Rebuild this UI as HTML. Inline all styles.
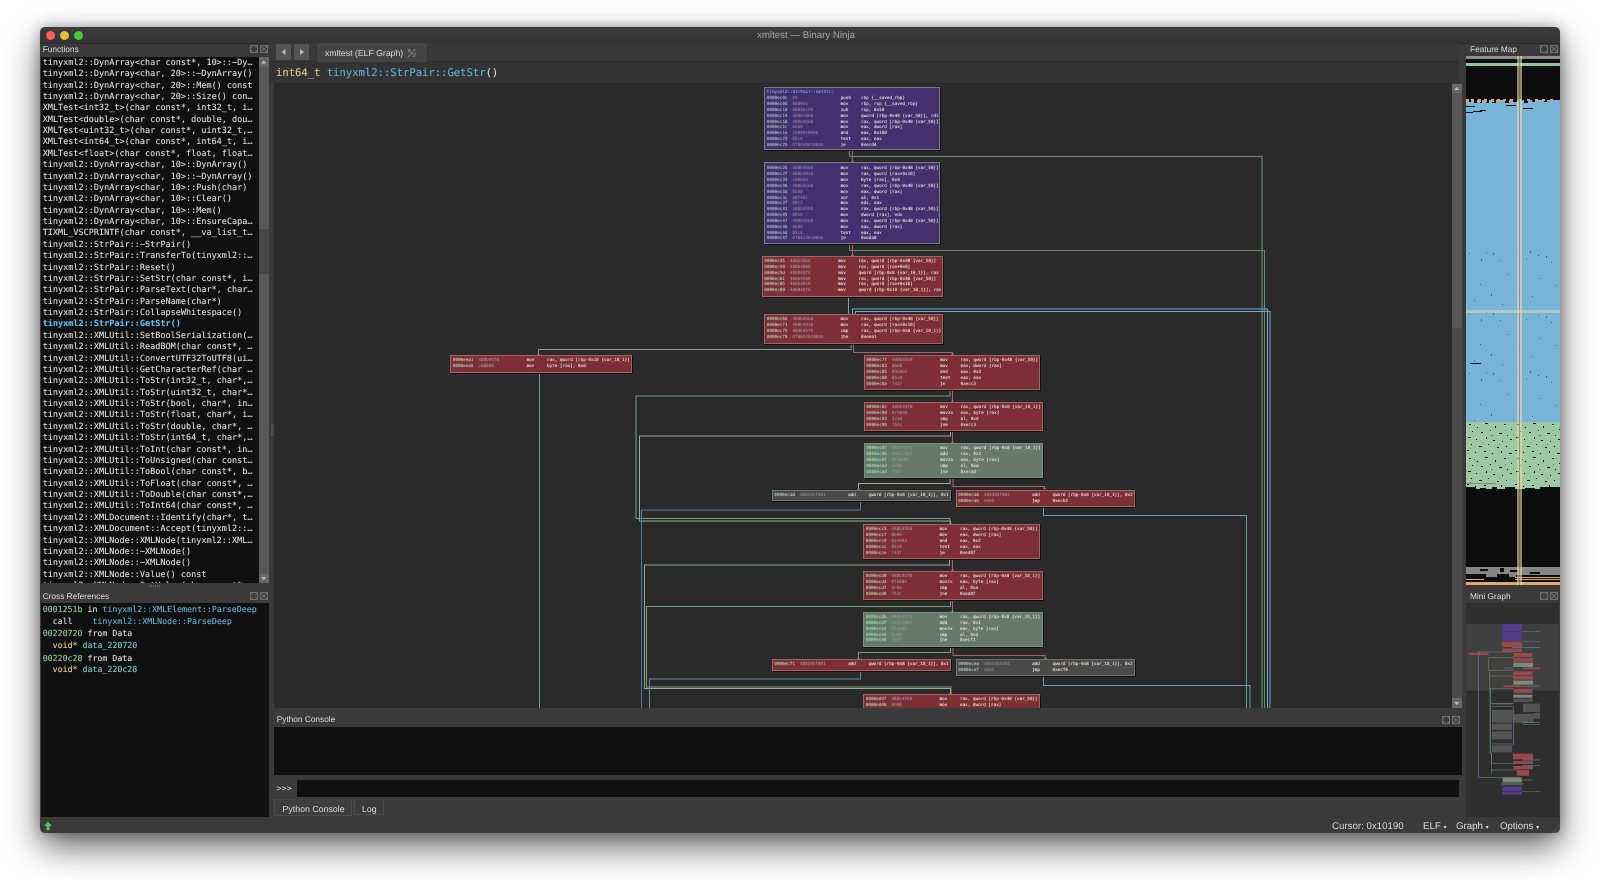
<!DOCTYPE html>
<html><head><meta charset="utf-8"><title>xmltest — Binary Ninja</title>
<style>
html,body{margin:0;padding:0}
body{width:1600px;height:886px;background:#fff;overflow:hidden;position:relative;font-family:"Liberation Sans",sans-serif;text-rendering:geometricPrecision}
.abs,#w,.t,.ic,.list,.bk{position:absolute}
#w{left:40px;top:27px;width:1520px;height:806px;background:#3a3a3a;border-radius:5px;box-shadow:0 14px 34px rgba(0,0,0,.6),0 0 12px rgba(0,0,0,.28)}
#tb{position:absolute;left:40px;top:27px;width:1520px;height:16px;background:linear-gradient(#3d3d3d,#343434);border-radius:5px 5px 0 0;border-bottom:1px solid #2a2a2a}
.d{position:absolute;width:9px;height:9px;border-radius:50%;top:30.5px}
.t{font-size:8.3px;color:#ddd;line-height:12px;white-space:pre}
.list{background:#101010;font-family:"DejaVu Sans Mono","Liberation Mono",monospace;font-size:8.5px;color:#ddd;white-space:pre;overflow:hidden;-webkit-text-stroke:.12px}
.list div{line-height:11.38px;height:11.38px;padding-left:1.7px}
.list .s{color:#63bdf0;font-weight:bold}
.x{position:absolute;left:0;white-space:pre;line-height:11px;font-size:8.27px}
.ad{color:#8fc79c}.fn{color:#63aed4}.ty{color:#dcc88e}.da{color:#74c6cf}
.sb{position:absolute;background:#585858}
.btn{position:absolute;background:#666}
.bk{box-sizing:border-box;border:1px solid #8a8a8a;padding-top:2px;box-shadow:1px 1px 0 #111;font-family:"DejaVu Sans Mono","Liberation Mono",monospace;font-size:4.3px;color:#eee;overflow:hidden;-webkit-text-stroke:.08px}
.bk p{position:relative;margin:0;height:5.85px;line-height:5.85px;white-space:pre}
.bk p a,.bk p b,.bk p i,.bk p u{position:absolute;top:0;font-style:normal;font-weight:normal;text-decoration:none}
.bk p a{left:1.8px;color:#b4d8bc}.bk p b{left:27.4px;color:#a4949a}.bk p i{left:75.6px}.bk p u{left:96px;color:#ece6de}
.pu{background:#44306f;border-color:#7a7a84}.pu p b{color:#8a84a8}.pu p a{color:#a4c8c0}
.re{background:#7d2f35;border-color:#a06468}
.gr{background:#667a6a;border-color:#7c8c80}.gr p b{color:#8a9a8e}.gr p a{color:#a4dcb0}
.gy{background:#4a4a4a;border-color:#707070}.gy p b{color:#8a8a8a}
.ttl{color:#6fb8e0;position:relative;height:5.85px;line-height:5.85px;padding-left:1.8px}
</style></head><body>
<div id="w"></div><div id="tb"></div>
<div class="d" style="left:45.5px;background:#fc5b57"></div>
<div class="d" style="left:59.5px;background:#e5bf3c"></div>
<div class="d" style="left:73.5px;background:#4fc53f"></div>
<div class="t" style="left:46px;width:1520px;top:29px;text-align:center;font-size:9.7px;line-height:14px;color:#a8a8a8">xmltest — Binary Ninja</div>

<!-- Dock titles -->
<div class="t" style="left:42.7px;top:43px">Functions</div>
<div class="t" style="left:42.7px;top:589.5px">Cross References</div>
<div class="t" style="left:1470px;top:43px">Feature Map</div>
<div class="t" style="left:1470px;top:589.5px">Mini Graph</div>
<div class="t" style="left:276.7px;top:713px">Python Console</div>

<!-- small dock icons -->
<svg class="abs" style="left:0;top:0" width="1600" height="886" viewBox="0 0 1600 886" fill="none" stroke="#6e6e6e" stroke-width="1">
<g id="i"><rect x="250.5" y="45.5" width="7" height="7"/><path d="M250.5 45.5l2 2m5-2l-2 2m-5 5l2-2m5 2l-2-2"/><rect x="260.5" y="45.5" width="7" height="7"/><path d="M260.5 45.5l7 7m0-7l-7 7"/></g>
<use href="#i" y="547"/><use href="#i" x="1290"/><use href="#i" x="1290" y="547"/><use href="#i" x="1192" y="671"/>
<path d="M149 585.5h12M149 587h12" stroke="#666" stroke-dasharray="1 1"/>
<path d="M271.5 425v12M273 425v12" stroke="#666" stroke-dasharray="1 1"/>
</svg>

<!-- Functions list -->
<div class="list" style="left:41px;top:57px;width:218px;height:526px;padding-top:.8px;box-sizing:border-box"><div>tinyxml2::DynArray&lt;char const*, 10&gt;::~Dy…</div><div>tinyxml2::DynArray&lt;char, 20&gt;::~DynArray()</div><div>tinyxml2::DynArray&lt;char, 20&gt;::Mem() const</div><div>tinyxml2::DynArray&lt;char, 20&gt;::Size() con…</div><div>XMLTest&lt;int32_t&gt;(char const*, int32_t, i…</div><div>XMLTest&lt;double&gt;(char const*, double, dou…</div><div>XMLTest&lt;uint32_t&gt;(char const*, uint32_t,…</div><div>XMLTest&lt;int64_t&gt;(char const*, int64_t, i…</div><div>XMLTest&lt;float&gt;(char const*, float, float…</div><div>tinyxml2::DynArray&lt;char, 10&gt;::DynArray()</div><div>tinyxml2::DynArray&lt;char, 10&gt;::~DynArray()</div><div>tinyxml2::DynArray&lt;char, 10&gt;::Push(char)</div><div>tinyxml2::DynArray&lt;char, 10&gt;::Clear()</div><div>tinyxml2::DynArray&lt;char, 10&gt;::Mem()</div><div>tinyxml2::DynArray&lt;char, 10&gt;::EnsureCapa…</div><div>TIXML_VSCPRINTF(char const*, __va_list_t…</div><div>tinyxml2::StrPair::~StrPair()</div><div>tinyxml2::StrPair::TransferTo(tinyxml2::…</div><div>tinyxml2::StrPair::Reset()</div><div>tinyxml2::StrPair::SetStr(char const*, i…</div><div>tinyxml2::StrPair::ParseText(char*, char…</div><div>tinyxml2::StrPair::ParseName(char*)</div><div>tinyxml2::StrPair::CollapseWhitespace()</div><div class="s">tinyxml2::StrPair::GetStr()</div><div>tinyxml2::XMLUtil::SetBoolSerialization(…</div><div>tinyxml2::XMLUtil::ReadBOM(char const*, …</div><div>tinyxml2::XMLUtil::ConvertUTF32ToUTF8(ui…</div><div>tinyxml2::XMLUtil::GetCharacterRef(char …</div><div>tinyxml2::XMLUtil::ToStr(int32_t, char*,…</div><div>tinyxml2::XMLUtil::ToStr(uint32_t, char*…</div><div>tinyxml2::XMLUtil::ToStr(bool, char*, in…</div><div>tinyxml2::XMLUtil::ToStr(float, char*, i…</div><div>tinyxml2::XMLUtil::ToStr(double, char*, …</div><div>tinyxml2::XMLUtil::ToStr(int64_t, char*,…</div><div>tinyxml2::XMLUtil::ToInt(char const*, in…</div><div>tinyxml2::XMLUtil::ToUnsigned(char const…</div><div>tinyxml2::XMLUtil::ToBool(char const*, b…</div><div>tinyxml2::XMLUtil::ToFloat(char const*, …</div><div>tinyxml2::XMLUtil::ToDouble(char const*,…</div><div>tinyxml2::XMLUtil::ToInt64(char const*, …</div><div>tinyxml2::XMLDocument::Identify(char*, t…</div><div>tinyxml2::XMLDocument::Accept(tinyxml2::…</div><div>tinyxml2::XMLNode::XMLNode(tinyxml2::XML…</div><div>tinyxml2::XMLNode::~XMLNode()</div><div>tinyxml2::XMLNode::~XMLNode()</div><div>tinyxml2::XMLNode::Value() const</div><div>tinyxml2::XMLNode::SetValue(char const*,…</div></div>
<div class="sb" style="left:259px;top:57px;width:9.5px;height:526px"></div>
<div class="sb" style="left:259px;top:229px;width:9.5px;height:45px;background:#474747"></div>
<div class="btn" style="left:259px;top:57px;width:9.5px;height:10px"></div>
<div class="btn" style="left:259px;top:574px;width:9.5px;height:9px"></div>
<svg class="abs" style="left:259px;top:57px" width="10" height="526"><path d="M2 6.5h5.5L4.75 3.5z" fill="#bbb"/><path d="M2 520h5.5l-2.75 3z" fill="#bbb"/></svg>

<!-- Cross refs -->
<div class="list" style="left:41px;top:603px;width:227.5px;height:214px">
<div class="x" style="top:1.200px"><span class="ad">0001251b</span> in <span class="fn">tinyxml2::XMLElement::ParseDeep</span></div>
<div class="x" style="top:12.500px">  call    <span class="fn">tinyxml2::XMLNode::ParseDeep</span></div>
<div class="x" style="top:25.200px"><span class="ad">00220720</span> from Data</div>
<div class="x" style="top:36.500px">  <span class="ty">void*</span> <span class="da">data_220720</span></div>
<div class="x" style="top:49.500px"><span class="ad">00220c28</span> from Data</div>
<div class="x" style="top:60.800px">  <span class="ty">void*</span> <span class="da">data_220c28</span></div>
</div>

<!-- Tab bar -->
<div class="abs" style="left:269px;top:43px;width:1190px;height:19px;background:#383838;border-bottom:1px solid #2c2c2c;box-sizing:border-box"></div>
<div class="abs" style="left:276px;top:44px;width:15px;height:16px;background:#555;border-radius:2px"></div>
<div class="abs" style="left:294px;top:44px;width:15px;height:16px;background:#555;border-radius:2px"></div>
<svg class="abs" style="left:276px;top:44px" width="34" height="16"><path d="M9.5 5v6L5.5 8z" fill="#bbb"/><path d="M24 5v6L28 8z" fill="#bbb"/></svg>
<div class="abs" style="left:317px;top:43px;width:110px;height:19px;background:#444;border-radius:2px 2px 0 0"></div>
<div class="t" style="left:325px;top:45.500px;font-size:8.700px;line-height:14px;color:#ddd">xmltest (ELF Graph)</div>
<svg class="abs" style="left:407px;top:48px" width="10" height="10" fill="none" stroke="#777"><path d="M1.5 1.5l7 7m0-7l-7 7"/><rect x="1.5" y="1.5" width="7" height="7" stroke-dasharray="2 3"/></svg>

<!-- Header -->
<div class="abs" style="left:269px;top:62px;width:1190px;height:21px;background:#333"></div>
<div class="abs" style="left:276px;top:66px;font:10.55px/14px 'DejaVu Sans Mono','Liberation Mono',monospace;color:#ddd;white-space:pre;-webkit-text-stroke:.12px"><span class="ty">int64_t</span> <span class="fn">tinyxml2::StrPair::GetStr</span>()</div>

<!-- Graph -->
<div class="abs" style="left:274px;top:83px;width:1178px;height:625px;background:#2a2a2a;overflow:hidden">
<div class="abs" style="left:-274px;top:-83px;width:1600px;height:886px">
<svg class="abs" style="left:0;top:0" width="1600" height="886" viewBox="0 0 1600 886" fill="none" stroke-width="1">
<g stroke="#648a6c">
<path d="M849.5 150v6.500h412.500v552" stroke-width="1.200"/>
<path d="M849.5 244v6.500h415v458"/>
</g>
<g stroke="#b0606e">
<path d="M852.500 150v12M852.500 244v12"/>
<path d="M853.500 344v8.500h99v3"/>
<path d="M952.500 390v12M952.500 431v12M952.500 559v12M952.500 600v12"/>
<path d="M953 478v8.500h91.500v3M953 647v8.500h92v3"/>
</g>
<g stroke="#6fa8cc">
<path d="M848.500 297v17" stroke="#7aa4b4"/>
<path d="M852.500 314v-5h415v399"/>
<path d="M855.500 314v-2.500h414.500v396.500"/>
</g>
<g stroke="#7d9c86">
<path d="M851 344v5.500H538.500v6" stroke="#8a9c94"/>
<path d="M950 390v6h-314v122.500h314v5.500" stroke="#70a47c"/>
<path d="M950.500 431v5H639.500v85h311v3" stroke="#9aa89c"/>
<path d="M950 478v5.500h-91.500v6" stroke="#98aca0"/>
<path d="M949.500 559v6h-305v123.500h306v5" stroke="#9aa89c"/>
<path d="M950.500 600v6.500h-304V687h304.500v6.500" stroke="#70a47c"/>
<path d="M950.500 647v5.500h-92v6.500" stroke="#70a47c"/>
</g>
<g stroke="#6a9cb0">
<path d="M539.500 373v335"/>
<path d="M860.500 501v9h-219v198" stroke="#4d7e98"/>
<path d="M1043.500 507v8.500h203v192.500"/>
<path d="M860.500 671v8h-211v29" stroke="#5a92ac"/>
<path d="M1043.500 676v9.500h206.500V708"/>
</g>
<g fill="#70a47c" stroke="none"><path d="M949 524l1.500-2 1.500 2zM949 694l1.500-2 1.500 2zM857 490l1.500-2 1.500 2zM857 659l1.500-2 1.500 2zM537 355l1.500-2 1.500 2z"/></g>
<g fill="#c06c78" stroke="none"><path d="M851 162l1.500-2 1.500 2zM851 256l1.500-2 1.500 2zM951 355l1.500-2 1.500 2zM951 402l1.500-2 1.500 2zM951 443l1.500-2 1.500 2zM1043 489l1.500-2 1.500 2zM951 571l1.500-2 1.500 2zM951 612l1.500-2 1.500 2zM1044 659l1.500-2 1.500 2z"/></g>
</svg>

<div class="bk pu" style="left:764px;top:87.300px;width:176px;height:62.700px"><div class="ttl">tinyxml2::StrPair::GetStr:</div>
<p><a>0000ec0c</a><b>55</b><i>push</i><u>rbp {__saved_rbp}</u></p>
<p><a>0000ec0d</a><b>4889e5</b><i>mov</i><u>rbp, rsp {__saved_rbp}</u></p>
<p><a>0000ec10</a><b>4883ec50</b><i>sub</i><u>rsp, 0x50</u></p>
<p><a>0000ec14</a><b>48897db8</b><i>mov</i><u>qword [rbp-0x48 {var_50}], rdi</u></p>
<p><a>0000ec18</a><b>488b45b8</b><i>mov</i><u>rax, qword [rbp-0x48 {var_50}]</u></p>
<p><a>0000ec1c</a><b>8b00</b><i>mov</i><u>eax, dword [rax]</u></p>
<p><a>0000ec1e</a><b>2500010000</b><i>and</i><u>eax, 0x100</u></p>
<p><a>0000ec23</a><b>85c0</b><i>test</i><u>eax, eax</u></p>
<p><a>0000ec25</a><b>0f84a9010000</b><i>je</i><u>0xecd4</u></p></div>

<div class="bk pu" style="left:764px;top:162.300px;width:176px;height:81.400px;padding-top:3px">
<p><a>0000ec2b</a><b>488b45b8</b><i>mov</i><u>rax, qword [rbp-0x48 {var_50}]</u></p>
<p><a>0000ec2f</a><b>488b4010</b><i>mov</i><u>rax, qword [rax+0x10]</u></p>
<p><a>0000ec33</a><b>c60000</b><i>mov</i><u>byte [rax], 0x0</u></p>
<p><a>0000ec36</a><b>488b45b8</b><i>mov</i><u>rax, qword [rbp-0x48 {var_50}]</u></p>
<p><a>0000ec3a</a><b>8b00</b><i>mov</i><u>eax, dword [rax]</u></p>
<p><a>0000ec3c</a><b>80f401</b><i>xor</i><u>ah, 0x1</u></p>
<p><a>0000ec3f</a><b>89c2</b><i>mov</i><u>edx, eax</u></p>
<p><a>0000ec41</a><b>488b45b8</b><i>mov</i><u>rax, qword [rbp-0x48 {var_50}]</u></p>
<p><a>0000ec45</a><b>8910</b><i>mov</i><u>dword [rax], edx</u></p>
<p><a>0000ec47</a><b>488b45b8</b><i>mov</i><u>rax, qword [rbp-0x48 {var_50}]</u></p>
<p><a>0000ec4b</a><b>8b00</b><i>mov</i><u>eax, dword [rax]</u></p>
<p><a>0000ec4d</a><b>85c0</b><i>test</i><u>eax, eax</u></p>
<p><a>0000ec4f</a><b>0f8413010000</b><i>je</i><u>0xeda8</u></p></div>

<div class="bk re" style="left:761.500px;top:256px;width:181.500px;height:41px">
<p><a>0000ec55</a><b>488b45b8</b><i>mov</i><u>rax, qword [rbp-0x48 {var_50}]</u></p>
<p><a>0000ec59</a><b>488b4008</b><i>mov</i><u>rax, qword [rax+0x8]</u></p>
<p><a>0000ec5d</a><b>488945f8</b><i>mov</i><u>qword [rbp-0x8 {var_10_1}], rax</u></p>
<p><a>0000ec61</a><b>488b45b8</b><i>mov</i><u>rax, qword [rbp-0x48 {var_50}]</u></p>
<p><a>0000ec65</a><b>488b4010</b><i>mov</i><u>rax, qword [rax+0x10]</u></p>
<p><a>0000ec69</a><b>488945f0</b><i>mov</i><u>qword [rbp-0x10 {var_18_1}], rax</u></p></div>

<div class="bk re" style="left:764px;top:314px;width:179px;height:29.700px">
<p><a>0000ec6d</a><b>488b45b8</b><i>mov</i><u>rax, qword [rbp-0x48 {var_50}]</u></p>
<p><a>0000ec71</a><b>488b4010</b><i>mov</i><u>rax, qword [rax+0x10]</u></p>
<p><a>0000ec75</a><b>483b45f0</b><i>cmp</i><u>rax, qword [rbp-0x8 {var_10_1}]</u></p>
<p><a>0000ec79</a><b>0f8622020000</b><i>jbe</i><u>0xeea1</u></p></div>

<div class="bk re" style="left:450px;top:355.300px;width:182px;height:17.400px">
<p><a>0000eea1</a><b>488b45f0</b><i>mov</i><u>rax, qword [rbp-0x10 {var_18_1}]</u></p>
<p><a>0000eea5</a><b>c60000</b><i>mov</i><u>byte [rax], 0x0</u></p></div>

<div class="bk re" style="left:863.500px;top:355.300px;width:176.500px;height:34.700px">
<p><a>0000ec7f</a><b>488b45b8</b><i>mov</i><u>rax, qword [rbp-0x48 {var_50}]</u></p>
<p><a>0000ec83</a><b>8b00</b><i>mov</i><u>eax, dword [rax]</u></p>
<p><a>0000ec85</a><b>83e002</b><i>and</i><u>eax, 0x2</u></p>
<p><a>0000ec88</a><b>85c0</b><i>test</i><u>eax, eax</u></p>
<p><a>0000ec8a</a><b>7437</b><i>je</i><u>0xecc3</u></p></div>

<div class="bk re" style="left:863.500px;top:402.300px;width:179.500px;height:28.700px">
<p><a>0000ec8c</a><b>488b45f8</b><i>mov</i><u>rax, qword [rbp-0x8 {var_10_1}]</u></p>
<p><a>0000ec90</a><b>0fb600</b><i>movzx</i><u>eax, byte [rax]</u></p>
<p><a>0000ec93</a><b>3c0d</b><i>cmp</i><u>al, 0xd</u></p>
<p><a>0000ec95</a><b>752c</b><i>jne</i><u>0xecc3</u></p></div>

<div class="bk gr" style="left:863.500px;top:443.300px;width:179.500px;height:34.700px">
<p><a>0000ec97</a><b>488b45f8</b><i>mov</i><u>rax, qword [rbp-0x8 {var_10_1}]</u></p>
<p><a>0000ec9b</a><b>4883c001</b><i>add</i><u>rax, 0x1</u></p>
<p><a>0000ec9f</a><b>0fb600</b><i>movzx</i><u>eax, byte [rax]</u></p>
<p><a>0000eca2</a><b>3c0a</b><i>cmp</i><u>al, 0xa</u></p>
<p><a>0000eca4</a><b>7507</b><i>jne</i><u>0xecad</u></p></div>

<div class="bk gy" style="left:771.500px;top:489.700px;width:179.500px;height:11.300px;padding-top:2px">
<p><a>0000ecad</a><b>488345f801</b><i>add</i><u>qword [rbp-0x8 {var_10_1}], 0x1</u></p></div>

<div class="bk re" style="left:955.500px;top:489.700px;width:179.500px;height:17.300px;padding-top:2px">
<p><a>0000eca6</a><b>488345f802</b><i>add</i><u>qword [rbp-0x8 {var_10_1}], 0x2</u></p>
<p><a>0000ecab</a><b>eb05</b><i>jmp</i><u>0xecb2</u></p></div>

<div class="bk re" style="left:863px;top:524.300px;width:177px;height:35px">
<p><a>0000ecc3</a><b>488b45b8</b><i>mov</i><u>rax, qword [rbp-0x48 {var_50}]</u></p>
<p><a>0000ecc7</a><b>8b00</b><i>mov</i><u>eax, dword [rax]</u></p>
<p><a>0000ecc9</a><b>83e002</b><i>and</i><u>eax, 0x2</u></p>
<p><a>0000eccc</a><b>85c0</b><i>test</i><u>eax, eax</u></p>
<p><a>0000ecce</a><b>7437</b><i>je</i><u>0xed07</u></p></div>

<div class="bk re" style="left:863px;top:571.300px;width:180px;height:28.700px">
<p><a>0000ecd0</a><b>488b45f8</b><i>mov</i><u>rax, qword [rbp-0x8 {var_10_1}]</u></p>
<p><a>0000ecd4</a><b>0fb600</b><i>movzx</i><u>eax, byte [rax]</u></p>
<p><a>0000ecd7</a><b>3c0a</b><i>cmp</i><u>al, 0xa</u></p>
<p><a>0000ecd9</a><b>752c</b><i>jne</i><u>0xed07</u></p></div>

<div class="bk gr" style="left:863px;top:612px;width:180px;height:35px">
<p><a>0000ecdb</a><b>488b45f8</b><i>mov</i><u>rax, qword [rbp-0x8 {var_10_1}]</u></p>
<p><a>0000ecdf</a><b>4883c001</b><i>add</i><u>rax, 0x1</u></p>
<p><a>0000ece3</a><b>0fb600</b><i>movzx</i><u>eax, byte [rax]</u></p>
<p><a>0000ece6</a><b>3c0d</b><i>cmp</i><u>al, 0xd</u></p>
<p><a>0000ece8</a><b>7507</b><i>jne</i><u>0xecf1</u></p></div>

<div class="bk re" style="left:771.500px;top:659px;width:179.500px;height:11.700px;padding-top:2px">
<p><a>0000ecf1</a><b>488345f801</b><i>add</i><u>qword [rbp-0x8 {var_10_1}], 0x1</u></p></div>

<div class="bk gy" style="left:955.500px;top:659px;width:179.500px;height:17px;padding-top:2px">
<p><a>0000ecea</a><b>488345f802</b><i>add</i><u>qword [rbp-0x8 {var_10_1}], 0x2</u></p>
<p><a>0000ecef</a><b>eb05</b><i>jmp</i><u>0xecf6</u></p></div>

<div class="bk re" style="left:863px;top:693.700px;width:177px;height:35px">
<p><a>0000ed07</a><b>488b45b8</b><i>mov</i><u>rax, qword [rbp-0x48 {var_50}]</u></p>
<p><a>0000ed0b</a><b>8b00</b><i>mov</i><u>eax, dword [rax]</u></p></div>
</div></div>

<!-- Graph scrollbar -->
<div class="sb" style="left:1452px;top:84px;width:9.500px;height:244px;background:#565656"></div>
<div class="sb" style="left:1452px;top:328px;width:9.500px;height:380px;background:#4a4a4a"></div>
<div class="btn" style="left:1452px;top:84px;width:9.500px;height:9px"></div>
<div class="btn" style="left:1452px;top:698px;width:9.500px;height:10px"></div>
<svg class="abs" style="left:1452px;top:84px" width="10" height="624"><path d="M2 6h5.500L4.750 3z" fill="#bbb"/><path d="M2 618h5.500l-2.750 3z" fill="#bbb"/></svg>

<!-- Feature map -->
<svg class="abs" style="left:1466px;top:56px" width="94" height="529" viewBox="1466 56 94 529" shape-rendering="crispEdges">
<defs>
<pattern id="pg" x="1466" y="422" width="48" height="34" patternUnits="userSpaceOnUse"><g fill="#0e0e0e">
<rect x="3" y="2" width="2" height="1"/><rect x="11" y="5" width="1" height="1"/><rect x="19" y="1" width="3" height="1"/><rect x="29" y="4" width="1" height="2"/><rect x="38" y="2" width="2" height="1"/><rect x="45" y="7" width="1" height="1"/><rect x="6" y="9" width="1" height="1"/><rect x="15" y="10" width="2" height="1"/><rect x="24" y="8" width="1" height="1"/><rect x="33" y="11" width="3" height="1"/><rect x="41" y="13" width="1" height="1"/><rect x="2" y="15" width="3" height="1"/><rect x="10" y="17" width="1" height="1"/><rect x="20" y="15" width="1" height="2"/><rect x="27" y="18" width="2" height="1"/><rect x="36" y="19" width="1" height="1"/><rect x="44" y="17" width="2" height="1"/><rect x="5" y="22" width="1" height="1"/><rect x="13" y="24" width="3" height="1"/><rect x="22" y="22" width="1" height="1"/><rect x="31" y="25" width="2" height="1"/><rect x="40" y="24" width="1" height="1"/><rect x="1" y="28" width="2" height="1"/><rect x="9" y="30" width="1" height="1"/><rect x="18" y="29" width="2" height="1"/><rect x="26" y="31" width="1" height="1"/><rect x="35" y="29" width="1" height="2"/><rect x="43" y="31" width="3" height="1"/></g>
<g fill="#6b8a72"><rect x="8" y="3" width="1" height="1"/><rect x="25" y="13" width="2" height="1"/><rect x="39" y="8" width="1" height="1"/><rect x="16" y="20" width="1" height="1"/><rect x="33" y="22" width="1" height="1"/><rect x="4" y="26" width="1" height="1"/></g></pattern>
<pattern id="pb" x="1466" y="250" width="94" height="60" patternUnits="userSpaceOnUse"><g fill="#3f6a8c">
<rect x="3" y="3" width="1" height="1"/><rect x="20" y="2" width="1" height="1"/><rect x="27" y="3" width="1" height="2"/><rect x="51" y="2" width="1" height="1"/><rect x="64" y="1" width="1" height="2"/><rect x="72" y="5" width="1" height="1"/><rect x="15" y="9" width="1" height="2"/><rect x="34" y="10" width="1" height="1"/><rect x="60" y="9" width="1" height="1"/><rect x="80" y="6" width="1" height="2"/><rect x="85" y="12" width="1" height="1"/><rect x="41" y="24" width="1" height="1"/><rect x="73" y="28" width="1" height="1"/><rect x="14" y="34" width="1" height="1"/><rect x="52" y="41" width="1" height="1"/><rect x="25" y="44" width="1" height="2"/><rect x="66" y="46" width="1" height="1"/><rect x="90" y="35" width="1" height="1"/><rect x="8" y="50" width="1" height="1"/><rect x="36" y="54" width="1" height="1"/></g></pattern>
</defs>
<rect x="1466" y="56" width="94" height="529" fill="#0e0e0e"/>
<rect x="1466" y="56" width="94" height="3" fill="#8c8c8c"/>
<rect x="1466" y="63" width="94" height="3" fill="#8fc8a0"/>
<rect x="1466" y="100" width="94" height="322" fill="#78b4d8"/>
<rect x="1466" y="250" width="94" height="172" fill="url(#pb)"/>
<g fill="#0e0e0e"><rect x="1468" y="100" width="3" height="2"/><rect x="1474" y="100" width="3" height="3"/><rect x="1480" y="100" width="2" height="3"/><rect x="1486" y="100" width="3" height="3"/><rect x="1492" y="100" width="4" height="3"/><rect x="1498" y="100" width="2" height="2"/><rect x="1505" y="100" width="4" height="3"/><rect x="1512" y="100" width="5" height="2"/><rect x="1524" y="100" width="4" height="3"/><rect x="1532" y="100" width="3" height="2"/><rect x="1544" y="100" width="3" height="2"/><rect x="1466" y="106" width="9" height="1"/><rect x="1466" y="112" width="7" height="1"/><rect x="1473" y="111" width="9" height="1"/><rect x="1480" y="110" width="6" height="1"/><rect x="1506" y="105" width="10" height="1"/><rect x="1523" y="108" width="10" height="1"/><rect x="1470" y="363" width="11" height="1"/></g>
<g fill="#e2a868"><rect x="1466" y="99" width="3" height="3"/><rect x="1471" y="99" width="3" height="3"/><rect x="1478" y="99" width="3" height="3"/><rect x="1484" y="99" width="3" height="3"/><rect x="1491" y="99" width="3" height="3"/><rect x="1497" y="99" width="3" height="3"/><rect x="1503" y="99" width="3" height="2"/><rect x="1510" y="99" width="3" height="3"/><rect x="1518" y="99" width="3" height="3"/><rect x="1527" y="99" width="3" height="2"/><rect x="1535" y="99" width="3" height="2"/><rect x="1542" y="99" width="3" height="2"/><rect x="1550" y="99" width="3" height="2"/></g>
<rect x="1466" y="422" width="94" height="67" fill="#9cc8a4"/>
<rect x="1466" y="422" width="94" height="67" fill="url(#pg)"/>
<rect x="1466" y="483" width="30" height="1" fill="#888"/>
<g fill="#0e0e0e"><rect x="1466" y="487" width="10" height="2"/><rect x="1480" y="488" width="6" height="1"/><rect x="1492" y="487" width="5" height="2"/><rect x="1505" y="487" width="10" height="2"/><rect x="1525" y="488" width="10" height="1"/><rect x="1540" y="487" width="20" height="2"/></g>
<rect x="1466" y="567" width="94" height="10" fill="#848484"/>
<g fill="#0e0e0e"><rect x="1480" y="569" width="8" height="2"/><rect x="1500" y="568" width="4" height="4"/><rect x="1510" y="570" width="8" height="2"/><rect x="1530" y="572" width="10" height="2"/><rect x="1466" y="574" width="20" height="3"/><rect x="1497" y="574" width="12" height="3"/><rect x="1516" y="575" width="44" height="2"/></g>
<rect x="1466" y="577" width="94" height="2" fill="#0e0e0e"/>
<rect x="1515" y="577" width="45" height="1" fill="#e2a868"/>
<rect x="1466" y="579" width="18" height="1" fill="#e2a868"/>
<rect x="1515" y="579" width="45" height="1" fill="#e2a868"/>
<rect x="1466" y="582" width="94" height="3" fill="#e2a868"/>
<rect x="1517" y="56" width="5" height="529" fill="#e8dcb0" fill-opacity=".6"/>
<rect x="1519" y="56" width="1" height="529" fill="#555" fill-opacity=".5"/>
<rect x="1466" y="310" width="94" height="3" fill="#e8dcb0" fill-opacity=".5"/>
</svg>

<!-- Mini graph -->
<svg class="abs" style="left:1466px;top:603px" width="93" height="214" viewBox="1466 603 93 214" fill="none">
<rect x="1466" y="603" width="93" height="214" fill="#2e2e2e"/>
<rect x="1466" y="624" width="93" height="66.700" fill="#404040"/>
<g transform="translate(1430 590) scale(.3333)" stroke-width="2">
<g fill="#553d8c"><rect x="217" y="102" width="58" height="22"/><rect x="217" y="126" width="58" height="27"/><rect x="218" y="590" width="57" height="14"/><rect x="218" y="606" width="57" height="8"/></g>
<g fill="#984848"><rect x="216" y="155" width="60" height="16"/><rect x="218" y="176" width="58" height="10"/><rect x="117" y="188" width="59" height="7"/><rect x="250" y="189" width="57" height="12"/><rect x="250" y="204" width="59" height="11"/><rect x="279" y="232" width="51" height="6"/><rect x="250" y="244" width="57" height="12"/><rect x="250" y="258" width="59" height="11"/><rect x="220" y="286" width="58" height="5"/><rect x="250" y="297" width="57" height="13"/><rect x="249" y="491" width="60" height="17"/><rect x="250" y="513" width="59" height="9"/><rect x="250" y="528" width="59" height="10"/><rect x="260" y="540" width="37" height="17"/></g>
<g fill="#788c7e"><rect x="250" y="218" width="59" height="13"/><rect x="250" y="272" width="59" height="12"/><rect x="250" y="314" width="57" height="9"/><rect x="218" y="562" width="57" height="15"/></g>
<g fill="#555"><rect x="220" y="232" width="28" height="6"/><rect x="279" y="286" width="51" height="6"/><rect x="250" y="326" width="59" height="10"/><rect x="279" y="341" width="51" height="25"/><rect x="186" y="360" width="62" height="38"/><rect x="252" y="372" width="58" height="26"/><rect x="310" y="369" width="20" height="17"/><rect x="186" y="401" width="60" height="19"/><rect x="186" y="424" width="60" height="24"/><rect x="186" y="466" width="60" height="21"/><rect x="214" y="578" width="65" height="8"/></g>
<g stroke="#5f8c9c" opacity=".85"><path d="M146 186v376h72M180 295v195h5v60M244 350h6v112h-62M279 398v5h51M186 350h62"/></g>
<g stroke="#6a8a72" opacity=".85"><path d="M176 203v38h74M178 240v56h72M182 296v194M182 310v30h68M176 203h74M178 258h72M184 490v30h66M184 540h76"/></g>
<g stroke="#777" opacity=".85"><path d="M275 124h55M276 155h54M275 604h54M145 186h105M186 342h64M275 570h30"/></g>
<g stroke="#5a9cc0" opacity=".85"><path d="M246 172h84M277 510h53M277 526h53M279 398h51"/></g>
</g>
</svg>

<!-- Python console -->
<div class="abs" style="left:274px;top:726.700px;width:1188px;height:48.300px;background:#101010"></div>
<div class="abs" style="left:276.500px;top:782.500px;font:8.500px/12px 'DejaVu Sans Mono','Liberation Mono',monospace;color:#ddd">&gt;&gt;&gt;</div>
<div class="abs" style="left:296.700px;top:780px;width:1162.300px;height:16.700px;background:#101010"></div>
<div class="abs" style="left:269px;top:799px;width:1190px;height:1px;background:#444"></div>
<div class="abs" style="left:274px;top:800px;width:78px;height:16px;box-sizing:border-box;border:1px solid #4c4c4c;border-top:0;background:#3e3e3e"></div>
<div class="abs" style="left:354px;top:800px;width:30px;height:15px;box-sizing:border-box;border:1px solid #4c4c4c;border-top:0"></div>
<div class="t" style="left:282.500px;top:801.500px;font-size:8.800px;line-height:14px">Python Console</div>
<div class="t" style="left:362px;top:801.500px;font-size:8.800px;line-height:14px">Log</div>

<!-- Status bar -->
<svg class="abs" style="left:43px;top:821px" width="10" height="10"><path d="M5 0.500L9 5H6.500v4h-3V5H1z" fill="#58c060"/></svg>
<div class="t" style="left:1332px;top:820px;font-size:9.700px;line-height:14px">Cursor: 0x10190</div>
<div class="t" style="left:1423px;top:820px;font-size:9.700px;line-height:14px">ELF <span style="font-size:6px">▾</span></div>
<div class="t" style="left:1456px;top:820px;font-size:9.700px;line-height:14px">Graph <span style="font-size:6px">▾</span></div>
<div class="t" style="left:1500px;top:820px;font-size:9.700px;line-height:14px">Options <span style="font-size:6px">▾</span></div>
<svg class="abs" style="left:1550px;top:823px" width="10" height="10" stroke="#666" fill="none"><path d="M2 9.500l7.500-7.500M5 9.500l4.500-4.500M8 9.500l1.500-1.500" stroke-dasharray="1 1"/></svg>
</body></html>
